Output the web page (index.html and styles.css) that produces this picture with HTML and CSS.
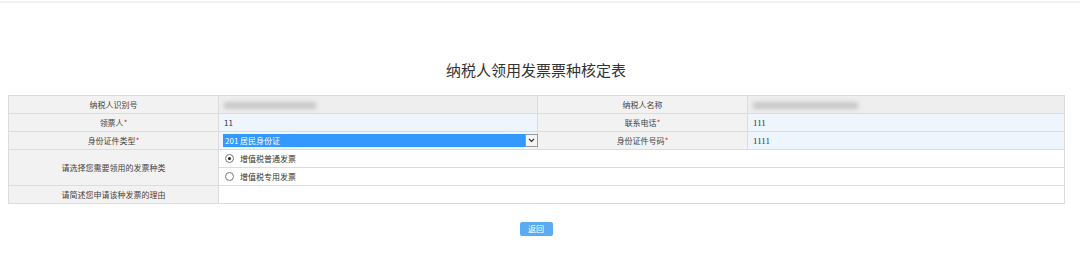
FILE: index.html
```html
<!DOCTYPE html>
<html lang="zh-CN">
<head>
    <meta charset="UTF-8">
    <title>纳税人领用发票票种核定表</title>
    <link rel="stylesheet" href="styles.css">
</head>
<body>
    <div class="topline"></div>
    <div class="page">
        <h1 class="title">纳税人领用发票票种核定表</h1>

        <table class="form-table">
            <colgroup>
                <col class="c-label">
                <col class="c-value">
                <col class="c-label2">
                <col class="c-value2">
            </colgroup>
            <tr>
                <td class="label">纳税人识别号</td>
                <td class="value readonly"><span class="masked m1"></span></td>
                <td class="label">纳税人名称</td>
                <td class="value readonly"><span class="masked m2"></span></td>
            </tr>
            <tr>
                <td class="label">领票人<span class="req">*</span></td>
                <td class="value editable">11</td>
                <td class="label">联系电话<span class="req">*</span></td>
                <td class="value editable num">111</td>
            </tr>
            <tr>
                <td class="label">身份证件类型<span class="req">*</span></td>
                <td class="value editable select-cell">
                    <div class="fake-select">
                        <span class="selected">201 居民身份证</span>
                        <span class="arrow">
                            <svg width="7" height="5" viewBox="0 0 7 5"><path d="M1 1 L3.5 3.5 L6 1" fill="none" stroke="#333" stroke-width="1.2"/></svg>
                        </span>
                    </div>
                </td>
                <td class="label">身份证件号码<span class="req">*</span></td>
                <td class="value editable num">1111</td>
            </tr>
            <tr>
                <td class="label" rowspan="2">请选择您需要领用的发票种类</td>
                <td class="value radio-cell" colspan="3">
                    <label class="radio"><span class="dot checked"></span>增值税普通发票</label>
                </td>
            </tr>
            <tr>
                <td class="value radio-cell" colspan="3">
                    <label class="radio"><span class="dot"></span>增值税专用发票</label>
                </td>
            </tr>
            <tr>
                <td class="label">请简述您申请该种发票的理由</td>
                <td class="value blank" colspan="3"></td>
            </tr>
        </table>

        <div class="actions">
            <button class="back-btn">返回</button>
        </div>
    </div>
</body>
</html>
```

FILE: styles.css
```css
body {
    margin: 0;
    padding: 0;
    background: #fff;
    font-family: "Noto Sans CJK SC", "Liberation Sans", sans-serif;
    color: #333;
}

.topline {
    height: 2px;
    margin-top: 1px;
    background: #f2f2f2;
}

.page {
    margin-left: 8px;
    width: 1056px;
}

.title {
    margin: 57px 0 0;
    height: 35px;
    font-size: 15px;
    font-weight: normal;
    text-align: center;
    color: #333;
    line-height: 20px;
}

.form-table {
    width: 1056px;
    border-collapse: collapse;
    table-layout: fixed;
    font-size: 8px;
}

.c-label { width: 210px; }
.c-value { width: 319px; }
.c-label2 { width: 210px; }
.c-value2 { width: 317px; }

.form-table td {
    border: 1px solid #dcdcdc;
    height: 17px;
    padding: 0;
    line-height: 12px;
}

.label {
    background: #f2f2f2;
    text-align: center;
    color: #444;
}

.req {
    color: #e02020;
}

.value {
    padding-left: 5px !important;
    color: #333;
}

.readonly {
    background: #eeeeee;
}

.editable {
    background: #eef5fd;
}

.num {
    font-family: "Liberation Serif", serif;
    font-size: 9px;
}

.masked {
    display: inline-block;
    height: 7px;
    background: #c8c8c8;
    filter: blur(2px);
    vertical-align: middle;
}

.m1 { width: 92px; }
.m2 { width: 105px; }

.select-cell {
    padding-left: 4px !important;
}

.fake-select {
    display: flex;
    height: 13px;
    width: 315px;
}

.selected {
    flex: 1;
    background: #3399ff;
    color: #fff;
    padding-left: 2px;
    line-height: 13px;
}

.arrow {
    width: 13px;
    border: 1px solid #9a9a9a;
    background: #f4f4f4;
    display: flex;
    align-items: center;
    justify-content: center;
    box-sizing: border-box;
}

.radio-cell {
    background: #fff;
    height: 17px;
}

.radio {
    display: flex;
    align-items: center;
    gap: 6px;
    padding-left: 1px;
}

.dot {
    width: 7px;
    height: 7px;
    border: 1px solid #777;
    border-radius: 50%;
    background: #fff;
    position: relative;
}

.dot.checked::after {
    content: "";
    position: absolute;
    left: 2px;
    top: 2px;
    width: 3px;
    height: 3px;
    border-radius: 50%;
    background: #222;
}

.blank {
    background: #fff;
}

.actions {
    display: flex;
    justify-content: center;
    margin-top: 18px;
}

.back-btn {
    width: 33px;
    height: 14px;
    padding: 0;
    border: none;
    border-radius: 2px;
    background: #5aabf2;
    color: #fff;
    font-family: "Noto Sans CJK SC", sans-serif;
    font-size: 8px;
    line-height: 14px;
    cursor: pointer;
}
```
